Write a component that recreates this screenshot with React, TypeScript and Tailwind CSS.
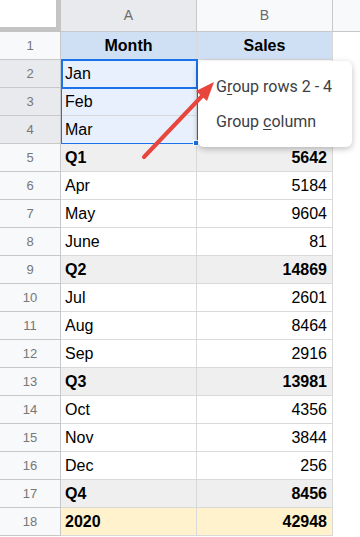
import React from "react";

type Row = { a: string; b: string; kind?: "head" | "sum" | "total"; sel?: boolean };

const rows: Row[] = [
  { a: "Month", b: "Sales", kind: "head" },
  { a: "Jan", b: "", sel: true },
  { a: "Feb", b: "", sel: true },
  { a: "Mar", b: "", sel: true },
  { a: "Q1", b: "5642", kind: "sum" },
  { a: "Apr", b: "5184" },
  { a: "May", b: "9604" },
  { a: "June", b: "81" },
  { a: "Q2", b: "14869", kind: "sum" },
  { a: "Jul", b: "2601" },
  { a: "Aug", b: "8464" },
  { a: "Sep", b: "2916" },
  { a: "Q3", b: "13981", kind: "sum" },
  { a: "Oct", b: "4356" },
  { a: "Nov", b: "3844" },
  { a: "Dec", b: "256" },
  { a: "Q4", b: "8456", kind: "sum" },
  { a: "2020", b: "42948", kind: "total" },
];

function rowBg(r: Row) {
  if (r.kind === "head") return "bg-[#cfe0f5]";
  if (r.kind === "sum") return "bg-[#efefef]";
  if (r.kind === "total") return "bg-[#fff2cc]";
  return "bg-white";
}

export default function App() {
  return (
    <div className="relative w-[360px] h-[537px] overflow-hidden bg-white font-['Liberation_Sans',Arial,sans-serif] text-black">
      {/* column headers */}
      <div className="flex h-[32px]">
        <div className="w-[61px] h-[32px] bg-white border-r-[5px] border-b-[5px] border-[#c4c4c4]" />
        <div className="w-[136px] flex items-center justify-center bg-[#e8eaed] border-r border-b border-[#c8c8c8] text-[14px] text-[#6b6b6b]">
          A
        </div>
        <div className="w-[136px] flex items-center justify-center bg-[#f8f9fa] border-r border-b border-[#c8c8c8] text-[14px] text-[#6b6b6b]">
          B
        </div>
        <div className="flex-1 bg-[#f8f9fa] border-b border-[#c8c8c8]" />
      </div>

      {rows.map((r, i) => {
        const bold = r.kind !== undefined;
        return (
          <div key={i} className="flex h-[28px]">
            <div
              className={`w-[61px] flex items-center justify-center border-r border-b border-[#c8c8c8] text-[13px] text-[#777] ${
                r.sel ? "bg-[#e8eaed]" : "bg-[#f8f9fa]"
              }`}
            >
              {i + 1}
            </div>
            <div
              className={`w-[136px] flex items-center px-[4px] border-r border-b border-[#d9d9d9] text-[16px] ${
                r.sel ? "bg-[#e8f0fe]" : rowBg(r)
              } ${bold ? "font-bold" : ""} ${r.kind === "head" ? "justify-center" : ""}`}
            >
              {r.a}
            </div>
            <div
              className={`w-[136px] flex items-center px-[5px] border-r border-b border-[#d9d9d9] text-[16px] ${rowBg(r)} ${
                bold ? "font-bold" : ""
              } ${r.kind === "head" ? "justify-center" : "justify-end"}`}
            >
              {r.b}
            </div>
            <div className="flex-1 bg-white" />
          </div>
        );
      })}

      {/* selection range A2:A4 */}
      <div className="absolute left-[61px] top-[59px] w-[137px] h-[85px] border border-[#1a73e8] pointer-events-none" />
      <div className="absolute left-[61px] top-[59px] w-[137px] h-[30px] border-2 border-[#1a73e8] pointer-events-none" />
      <div className="absolute left-[193px] top-[140px] w-[6px] h-[6px] bg-[#1a73e8] border border-white" />

      {/* context menu */}
      <div className="absolute left-[198px] top-[61px] w-[154px] h-[86px] bg-white rounded-[6px] shadow-[0_2px_6px_rgba(0,0,0,0.25)] font-['Roboto',Arial,sans-serif] text-[16px] text-[#3c4043] py-[9px]">
        <div className="h-[34px] flex items-center pl-[18px] whitespace-nowrap">
          <span>
            G<span className="underline underline-offset-2">r</span>oup rows 2 - 4
          </span>
        </div>
        <div className="h-[36px] flex items-center pl-[18px] whitespace-nowrap">
          <span>
            Group <span className="underline underline-offset-2">c</span>olumn
          </span>
        </div>
      </div>

      {/* red arrow */}
      <svg className="absolute left-0 top-0 pointer-events-none" width="360" height="537">
        <line x1="144" y1="157" x2="203" y2="95" stroke="#e8453c" strokeWidth="4" strokeLinecap="round" />
        <polygon points="214,82 196,91 207,101" fill="#e8453c" />
      </svg>
    </div>
  );
}
